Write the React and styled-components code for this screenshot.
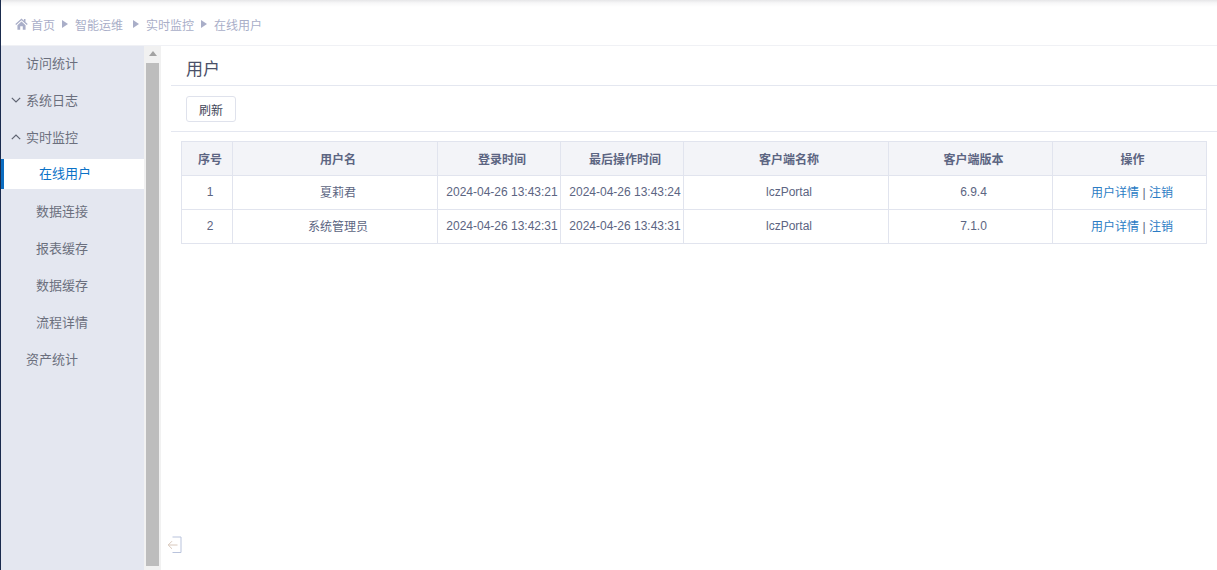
import React from 'react';
import styled, { createGlobalStyle } from 'styled-components';

const GlobalStyle = createGlobalStyle`
  html, body { margin: 0; padding: 0; height: 100%; background: #fff; overflow: hidden; }
  body { font-family: "Liberation Sans", "Noto Sans CJK SC", sans-serif; font-size: 13px; }
  * { box-sizing: border-box; }
`;

const menu = [
  { label: '访问统计' },
  { label: '系统日志', arrow: 'down' },
  { label: '实时监控', arrow: 'up' },
  { label: '在线用户', sub: true, active: true },
  { label: '数据连接', sub: true },
  { label: '报表缓存', sub: true },
  { label: '数据缓存', sub: true },
  { label: '流程详情', sub: true },
  { label: '资产统计' },
];

const crumbs = ['智能运维', '实时监控', '在线用户'];

const columns = [
  { title: '序号', width: 51 },
  { title: '用户名', width: 205 },
  { title: '登录时间', width: 123 },
  { title: '最后操作时间', width: 123 },
  { title: '客户端名称', width: 205 },
  { title: '客户端版本', width: 164 },
  { title: '操作', width: 154 },
];

const users = [
  { id: 1, name: '夏莉君', login: '2024-04-26 13:43:21', last: '2024-04-26 13:43:24', client: 'lczPortal', version: '6.9.4' },
  { id: 2, name: '系统管理员', login: '2024-04-26 13:42:31', last: '2024-04-26 13:43:31', client: 'lczPortal', version: '7.1.0' },
];

function App() {
  return (
    <Page>
      <GlobalStyle />
      <Breadcrumb>
        <HomeIcon viewBox="0 0 14 13">
          <path d="M7 0.5 L0.3 6.6 L1.2 7.5 L7 2.4 L12.8 7.5 L13.7 6.6 L11.3 4.4 V1.2 H9.6 V2.9 Z" />
          <path d="M2.6 7.8 L7 3.9 L11.4 7.8 V12.6 H8.4 V9 H5.6 V12.6 H2.6 Z" />
        </HomeIcon>
        <Crumb>首页</Crumb>
        {crumbs.map((c, i) => (
          <React.Fragment key={c}>
            <CrumbArrow $wide={i === 1} />
            <Crumb>{c}</Crumb>
          </React.Fragment>
        ))}
      </Breadcrumb>
      <Body>
        <Sidebar>
          <MenuList>
            {menu.map((m) => (
              <MenuItem key={m.label} $sub={m.sub} $active={m.active}>
                {m.arrow && (
                  <MenuChevron viewBox="0 0 10 6" fill="none">
                    <path d={m.arrow === 'down' ? 'M0.8 0.8 L5 5 L9.2 0.8' : 'M0.8 5.2 L5 1 L9.2 5.2'} />
                  </MenuChevron>
                )}
                {m.label}
              </MenuItem>
            ))}
          </MenuList>
          <ScrollTrack>
            <ScrollUp />
            <ScrollThumb />
          </ScrollTrack>
        </Sidebar>
        <Main>
          <TitleBar>用户</TitleBar>
          <Toolbar>
            <RefreshButton>刷新</RefreshButton>
          </Toolbar>
          <TableWrap>
            <Table>
              <colgroup>
                {columns.map((c) => <col key={c.title} width={c.width} />)}
              </colgroup>
              <thead>
                <tr>{columns.map((c) => <Th key={c.title}>{c.title}</Th>)}</tr>
              </thead>
              <tbody>
                {users.map((u) => (
                  <tr key={u.id}>
                    <Td>{u.id}</Td>
                    <Td>{u.name}</Td>
                    <Td>{u.login}</Td>
                    <Td>{u.last}</Td>
                    <Td>{u.client}</Td>
                    <Td>{u.version}</Td>
                    <ActionCell><ActionLink>用户详情</ActionLink> | <ActionLink>注销</ActionLink></ActionCell>
                  </tr>
                ))}
              </tbody>
            </Table>
          </TableWrap>
          <CollapseBar>
            <CollapseIcon viewBox="0 0 15 18" fill="none">
              <path className="frame" d="M5.5 1 H14 V16.5 H5.5" />
              <path className="arrow" d="M10.5 9 H1.2 M5 5.2 L1.2 9 L5 12.8" />
            </CollapseIcon>
          </CollapseBar>
        </Main>
      </Body>
    </Page>
  );
}

const Page = styled.div`
  width: 1217px;
  height: 570px;
  display: flex;
  flex-direction: column;
  border-left: 1px solid #1a2b4d;
  color: #5c6582;
  overflow: hidden;
`;

const Breadcrumb = styled.div`
  height: 46px;
  flex: none;
  display: flex;
  align-items: center;
  padding: 3px 0 0 14px;
  border-bottom: 1px solid #f0f1f5;
  background: linear-gradient(#e6e6e8 0, #f7f7f8 3px, #fff 7px);
`;

const HomeIcon = styled.svg`
  width: 13px;
  height: 12px;
  fill: #a9aec8;
  margin-right: 3px;
`;

const Crumb = styled.span`
  font-size: 12px;
  color: #a9aec8;
`;

const CrumbArrow = styled.i`
  width: 0;
  height: 0;
  margin: 0 7px 0 ${(p) => (p.$wide ? '10px' : '7px')};
  border-left: 6px solid #a9aec8;
  border-top: 4px solid transparent;
  border-bottom: 4px solid transparent;
`;

const Body = styled.div`
  flex: 1;
  display: flex;
  min-height: 0;
`;

const Sidebar = styled.aside`
  width: 160px;
  flex: none;
  display: flex;
`;

const MenuList = styled.nav`
  width: 143px;
  background: #e4e7f0;
`;

const MenuItem = styled.div`
  position: relative;
  height: 37px;
  display: flex;
  align-items: center;
  font-size: 13px;
  padding-bottom: 5px;
  padding-left: ${(p) => (p.$sub ? '35px' : '25px')};
  color: ${(p) => (p.$active ? '#0b72c7' : '#6b6f7d')};
  background: ${(p) => (p.$active ? '#fff' : 'transparent')};
  ${(p) => p.$active && `
    height: 30px;
    margin: 2px 0 5px;
    padding-bottom: 4px;
    border-left: 3px solid #0b6cc0;
  `}
`;

const MenuChevron = styled.svg`
  position: absolute;
  left: 10px;
  top: 14px;
  width: 10px;
  height: 6px;
  stroke: #5f6472;
  stroke-width: 1.2;
`;

const ScrollTrack = styled.div`
  width: 17px;
  background: #f1f1f1;
  display: flex;
  flex-direction: column;
  align-items: center;
  padding-top: 5px;
`;

const ScrollUp = styled.i`
  width: 0;
  height: 0;
  border-left: 4px solid transparent;
  border-right: 4px solid transparent;
  border-bottom: 5px solid #a3a3a3;
`;

const ScrollThumb = styled.div`
  width: 13px;
  height: 503px;
  margin-top: 7px;
  background: #bdbdbd;
`;

const Main = styled.main`
  flex: 1;
  display: flex;
  flex-direction: column;
  min-width: 0;
  padding-left: 10px;
`;

const TitleBar = styled.h2`
  margin: 0;
  height: 40px;
  padding: 12px 0 0 15px;
  font-size: 17px;
  font-weight: 400;
  line-height: 24px;
  color: #4a5068;
  border-bottom: 1px solid #e4e7f0;
`;

const Toolbar = styled.div`
  height: 46px;
  padding: 10px 0 0 15px;
  border-bottom: 1px solid #e4e7f0;
`;

const RefreshButton = styled.button`
  width: 50px;
  height: 26px;
  padding: 0;
  font: inherit;
  font-size: 12px;
  color: #3f4659;
  background: #fff;
  border: 1px solid #dfe2ec;
  border-radius: 3px;
`;

const TableWrap = styled.div`
  padding: 9px 0 0 10px;
`;

const Table = styled.table`
  width: 1025px;
  table-layout: fixed;
  border-collapse: collapse;
  font-size: 12px;
`;

const Th = styled.th`
  height: 34px;
  padding: 0 0 1px 6px;
  text-align: center;
  font-weight: 700;
  color: #5c6582;
  background: #f3f4f8;
  border: 1px solid #e1e4ee;
`;

const Td = styled.td`
  height: 34px;
  padding: 0 0 2px 6px;
  text-align: center;
  white-space: nowrap;
  color: #5c6582;
  border: 1px solid #e1e4ee;
`;

const ActionCell = styled(Td)`
  padding-left: 5px;
`;

const ActionLink = styled.a`
  color: #2b7cc4;
`;

const CollapseBar = styled.div`
  margin: auto 0 0 -4px;
  height: 34px;
`;

const CollapseIcon = styled.svg`
  display: block;
  width: 15px;
  height: 18px;
  .frame { stroke: #b9c3dc; stroke-width: 1; }
  .arrow { stroke: #d8c8bc; stroke-width: 1; }
`;

export default App;
